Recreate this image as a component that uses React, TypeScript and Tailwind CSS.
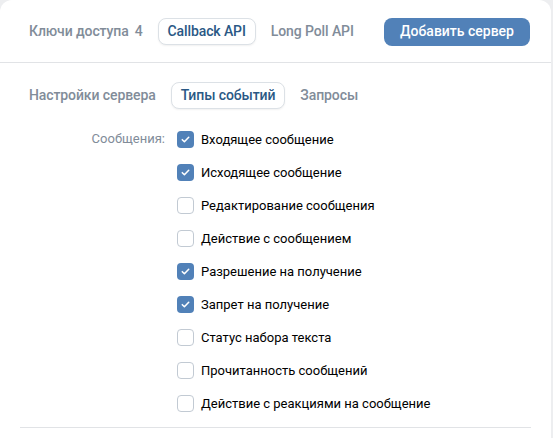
import { useState } from 'react'

const events = [
  { label: 'Входящее сообщение', checked: true },
  { label: 'Исходящее сообщение', checked: true },
  { label: 'Редактирование сообщения', checked: false },
  { label: 'Действие с сообщением', checked: false },
  { label: 'Разрешение на получение', checked: true },
  { label: 'Запрет на получение', checked: true },
  { label: 'Статус набора текста', checked: false },
  { label: 'Прочитанность сообщений', checked: false },
  { label: 'Действие с реакциями на сообщение', checked: false },
]

function Checkbox({ checked, onClick }: { checked: boolean; onClick: () => void }) {
  if (checked) {
    return (
      <button
        onClick={onClick}
        className="flex h-[17px] w-[17px] shrink-0 items-center justify-center rounded-[4px] bg-[#5181b8]"
      >
        <svg width="11" height="11" viewBox="0 0 12 12" fill="none">
          <path d="M2.5 6.2l2.3 2.3 4.7-4.9" stroke="#fff" strokeWidth="1.7" strokeLinecap="round" strokeLinejoin="round" />
        </svg>
      </button>
    )
  }
  return (
    <button
      onClick={onClick}
      className="h-[17px] w-[17px] shrink-0 rounded-[4px] border-[1.5px] border-[#c2cad3] bg-white"
    />
  )
}

export default function App() {
  const [items, setItems] = useState(events)

  const toggle = (i: number) => {
    setItems(items.map((it, idx) => (idx === i ? { ...it, checked: !it.checked } : it)))
  }

  return (
    <div className="h-screen w-full bg-[#edeef0] font-['Roboto',sans-serif]">
      <div className="h-full w-[551px] rounded-t-xl bg-white">
        {/* верхние вкладки */}
        <div className="flex h-[63px] items-center border-b border-[#e1e3e6] pl-[19px] pr-[21px] pt-px">
          <div className="flex items-center gap-[5px] text-[14px] font-medium tracking-[-0.1px]">
            <div className="flex h-[27px] items-center px-[10px] text-[#818c99]">
              Ключи доступа<span className="ml-[6px]">4</span>
            </div>
            <div className="flex h-[27px] items-center rounded-lg border border-[#dce1e6] bg-white px-[9px] text-[#2a5885] shadow-[0_1px_2px_rgba(0,0,0,0.06)]">
              Callback API
            </div>
            <div className="flex h-[27px] items-center px-[10px] text-[#818c99]">Long Poll API</div>
          </div>
          <button className="ml-auto flex h-[28px] items-center rounded-lg bg-[#5181b8] px-[16px] text-[14px] font-medium text-white">
            Добавить сервер
          </button>
        </div>

        {/* подвкладки */}
        <div className="flex items-center gap-[5px] pl-[19px] pt-[19px] text-[14px] font-medium tracking-[-0.1px]">
          <div className="flex h-[27px] items-center px-[10px] text-[#818c99]">Настройки сервера</div>
          <div className="flex h-[27px] items-center rounded-lg border border-[#dce1e6] bg-white px-[9px] text-[#2a5885] shadow-[0_1px_2px_rgba(0,0,0,0.06)]">
            Типы событий
          </div>
          <div className="flex h-[27px] items-center px-[10px] text-[#818c99]">Запросы</div>
        </div>

        {/* список событий */}
        <div className="mx-[20px] mt-[14px] flex border-b border-[#e1e3e6] pb-[7px]">
          <div className="w-[145px] pt-[6px] text-right text-[13px] text-[#818c99]">Сообщения:</div>
          <div className="ml-[12px] flex flex-col">
            {items.map((it, i) => (
              <label key={it.label} className="flex h-[33px] cursor-pointer items-center gap-[7px] text-[13px] text-[#000]">
                <Checkbox checked={it.checked} onClick={() => toggle(i)} />
                <span>{it.label}</span>
              </label>
            ))}
          </div>
        </div>
      </div>
    </div>
  )
}
